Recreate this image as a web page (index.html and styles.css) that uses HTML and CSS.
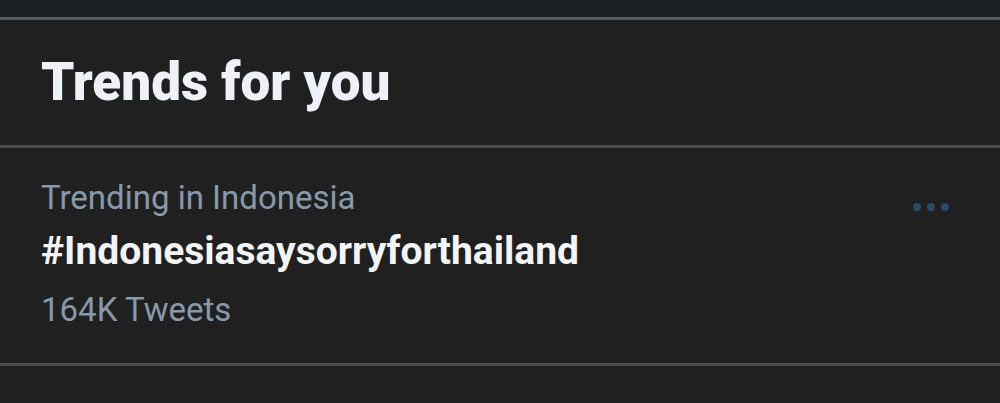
FILE: index.html
```html
<!DOCTYPE html>
<html lang="en">
<head>
    <meta charset="UTF-8">
    <meta name="viewport" content="width=device-width, initial-scale=1.0">
    <title>Trends for you</title>
    <link rel="stylesheet" href="styles.css">
</head>
<body>
    <div class="top-strip"></div>
    <section class="trends">
        <div class="trends-header">
            <h2>Trends for you</h2>
        </div>
        <div class="trend-item">
            <div class="trend-text">
                <div class="trend-context">Trending in Indonesia</div>
                <div class="trend-name">#Indonesiasaysorryforthailand</div>
                <div class="trend-count">164K Tweets</div>
            </div>
            <button class="more-button" aria-label="More">
                <svg width="40" height="10" viewBox="0 0 40 10">
                    <circle cx="5" cy="5" r="4"></circle>
                    <circle cx="19" cy="5" r="4"></circle>
                    <circle cx="33" cy="5" r="4"></circle>
                </svg>
            </button>
        </div>
        <!-- next trend starts below the fold -->
        <div class="trend-item next"></div>
    </section>
</body>
</html>
```

FILE: styles.css
```css
body {
    margin: 0;
    background: #202020;
    font-family: Roboto, "Noto Sans", sans-serif;
    color: #eef1f6;
    height: 403px;
    overflow: hidden;
}
.top-strip {
    height: 17px;
    background: #1b1f22;
    border-bottom: 3px solid #5a5c5e;
}
.trends-header {
    padding: 36px 41px 0;
    height: 89px;
    border-bottom: 3px solid #4e4e4e;
}
h2 {
    margin: 0;
    font-size: 53px;
    line-height: 1;
    font-weight: 900;
    color: #eef1f6;
}
.trend-item {
    display: flex;
    align-items: flex-start;
    justify-content: space-between;
    padding: 25px 41px 0;
    height: 190px;
    border-bottom: 3px solid #4e4e4e;
}
.trend-item.next {
    border-bottom: none;
}
.trend-context {
    font-size: 33px;
    line-height: 50px;
    color: #8799aa;
}
.trend-name {
    font-size: 39px;
    font-weight: 700;
    line-height: 56px;
    color: #f2f4f7;
}
.trend-count {
    font-size: 33px;
    line-height: 62px;
    color: #8799aa;
}
.more-button {
    background: none;
    border: none;
    padding: 0;
    margin: 27px 7px 0 0;
    fill: #2b4a69;
}
```
